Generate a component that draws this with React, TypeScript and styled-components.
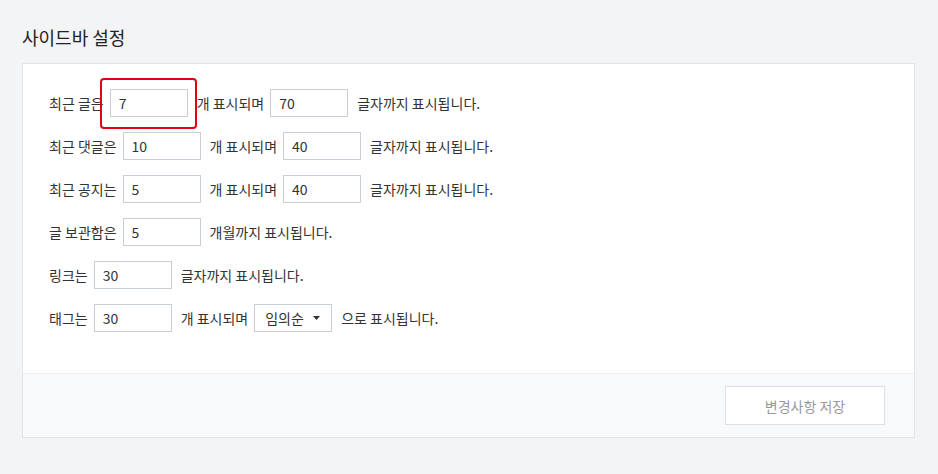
import React from "react";
import styled, { createGlobalStyle } from "styled-components";

const GlobalStyle = createGlobalStyle`
  html, body {
    margin: 0;
    padding: 0;
    background: #f3f4f6;
  }
  body {
    font-family: "Noto Sans CJK KR", "Noto Sans", sans-serif;
    color: #333;
  }
  * { box-sizing: border-box; }
`;

const Page = styled.div`
  padding: 0 23px 0 22px;
  height: 474px;
`;

const Title = styled.h2`
  margin: 0;
  padding-top: 24px;
  height: 63px;
  font-size: 18px;
  font-weight: 400;
  line-height: 27px;
  color: #222;
`;

const Card = styled.section`
  background: #fff;
  border: 1px solid #e1e4e9;
`;

const Body = styled.div`
  padding: 25px 26px 41px;
  display: flex;
  flex-direction: column;
  gap: 15px;
`;

const Row = styled.div`
  display: flex;
  align-items: center;
  height: 28px;
  font-size: 14px;
  color: #333;
`;

const Label = styled.span`
  margin-right: 6px;
  white-space: nowrap;
`;

const Text = styled.span`
  margin-left: 9px;
  margin-right: 6px;
  white-space: nowrap;
`;

const Field = styled.span`
  position: relative;
  display: inline-flex;
`;

const Input = styled.input`
  width: 78px;
  height: 28px;
  border: 1px solid #c9cfd7;
  border-radius: 0;
  padding: 0 8px;
  font-family: "Noto Sans CJK KR", "Noto Sans", sans-serif;
  font-size: 14px;
  color: #333;
  background: #fff;
  outline: none;
`;

const Highlight = styled.span`
  position: absolute;
  top: -11px;
  left: -10px;
  right: -9px;
  bottom: -12px;
  border: 2px solid #e3000f;
  border-radius: 4px;
  pointer-events: none;
`;

const Select = styled.div`
  width: 78px;
  height: 28px;
  border: 1px solid #c9cfd7;
  background: #fff;
  display: flex;
  align-items: center;
  justify-content: space-between;
  padding: 0 11px 0 10px;
  font-size: 14px;
  color: #333;
`;

const Caret = styled.svg`
  width: 7px;
  height: 4px;
  display: block;
`;

const Footer = styled.div`
  border-top: 1px solid #edeff3;
  background: #f8f9fb;
  padding: 12px 29px 12px;
  display: flex;
  justify-content: flex-end;
`;

const SaveButton = styled.button`
  width: 160px;
  height: 39px;
  border: 1px solid #dde0e6;
  background: #fff;
  color: #999;
  font-family: "Noto Sans CJK KR", "Noto Sans", sans-serif;
  font-size: 14px;
  cursor: default;
`;

export default function App() {
  return (
    <>
      <GlobalStyle />
      <Page>
        <Title>사이드바 설정</Title>
        <Card>
          <Body>
            <Row>
              <Label>최근 글은</Label>
              <Field>
                <Input defaultValue="7" />
                <Highlight />
              </Field>
              <Text>개 표시되며</Text>
              <Input defaultValue="70" />
              <Text>글자까지 표시됩니다.</Text>
            </Row>
            <Row>
              <Label>최근 댓글은</Label>
              <Input defaultValue="10" />
              <Text>개 표시되며</Text>
              <Input defaultValue="40" />
              <Text>글자까지 표시됩니다.</Text>
            </Row>
            <Row>
              <Label>최근 공지는</Label>
              <Input defaultValue="5" />
              <Text>개 표시되며</Text>
              <Input defaultValue="40" />
              <Text>글자까지 표시됩니다.</Text>
            </Row>
            <Row>
              <Label>글 보관함은</Label>
              <Input defaultValue="5" />
              <Text>개월까지 표시됩니다.</Text>
            </Row>
            <Row>
              <Label>링크는</Label>
              <Input defaultValue="30" />
              <Text>글자까지 표시됩니다.</Text>
            </Row>
            <Row>
              <Label>태그는</Label>
              <Input defaultValue="30" />
              <Text>개 표시되며</Text>
              <Select>
                <span>임의순</span>
                <Caret viewBox="0 0 7 4">
                  <path d="M0 0 H7 L3.5 4 Z" fill="#333" />
                </Caret>
              </Select>
              <Text>으로 표시됩니다.</Text>
            </Row>
          </Body>
          <Footer>
            <SaveButton>변경사항 저장</SaveButton>
          </Footer>
        </Card>
      </Page>
    </>
  );
}
